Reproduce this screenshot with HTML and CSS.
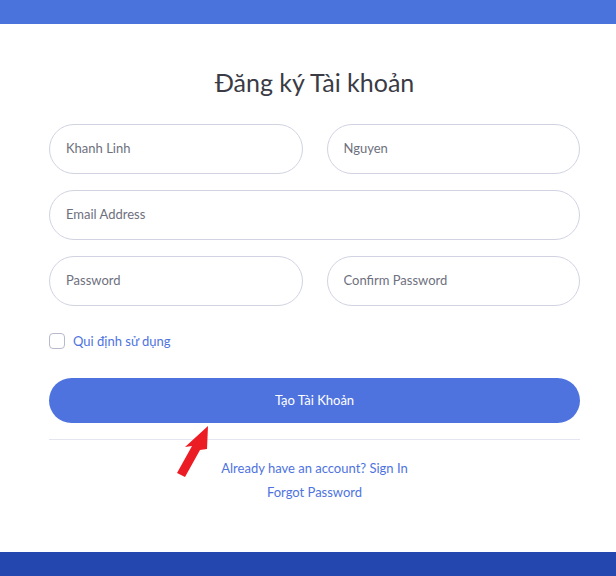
FILE: index.html
```html
<!DOCTYPE html>
<html lang="vi">

<head>
    <meta charset="UTF-8">
    <title>Đăng ký Tài khoản</title>
    <link rel="stylesheet" href="styles.css">
</head>

<body>
    <div class="topbar"></div>

    <!-- Register card -->
    <div class="card">
        <h1 class="title">Đăng ký Tài khoản</h1>
        <form class="user-form">
            <div class="row">
                <input type="text" class="form-input" placeholder="Khanh Linh">
                <input type="text" class="form-input" placeholder="Nguyen">
            </div>
            <div class="row">
                <input type="email" class="form-input" placeholder="Email Address">
            </div>
            <div class="row">
                <input type="password" class="form-input" placeholder="Password">
                <input type="password" class="form-input" placeholder="Confirm Password">
            </div>
            <label class="check-row">
                <span class="check-box"></span>
                <span class="check-label">Qui định sử dụng</span>
            </label>
            <button type="button" class="btn-primary">Tạo Tài Khoản</button>
        </form>
        <hr class="divider">
        <div class="links">
            <a href="#">Already have an account? Sign In</a>
            <a href="#">Forgot Password</a>
        </div>

        <!-- Red pointer arrow -->
        <svg class="pointer" width="45" height="62" viewBox="0 0 45 62">
            <polygon points="38,6 37,29 30,30 15,57 7,53 22,26 15,27" fill="#ec1c24"/>
        </svg>
    </div>

    <div class="bottombar"></div>
</body>

</html>
```

FILE: styles.css
```css
/* Basic reset */
body,
html {
    margin: 0;
    padding: 0;
    height: 100%;
    overflow: hidden;
    background: #fff;
    font-family: Lato, "Open Sans", sans-serif;
}

body {
    display: flex;
    flex-direction: column;
}

.topbar {
    height: 24px;
    background: #4a73dc;
}

.bottombar {
    height: 24px;
    background: #2347ae;
}

/* Card holding the form */
.card {
    flex: 1;
    position: relative;
    padding: 42px 36px 0 49px;
}

.title {
    margin: 0 0 26px;
    font-size: 25px;
    line-height: 32px;
    font-weight: 400;
    text-align: center;
    color: #3a3b45;
}

.user-form {
    display: flex;
    flex-direction: column;
}

.row {
    display: flex;
    gap: 24px;
    margin-bottom: 16px;
}

.form-input {
    flex: 1;
    min-width: 0;
    height: 50px;
    box-sizing: border-box;
    padding: 0 16px 2px;
    border: 1px solid #d1d3e2;
    border-radius: 10rem;
    font-family: inherit;
    font-size: 13px;
    color: #6e707e;
    outline: none;
}

.form-input::placeholder {
    color: #6e707e;
}

/* Terms checkbox */
.check-row {
    display: flex;
    align-items: center;
    gap: 8px;
    height: 20px;
    margin: 9px 0 27px;
    cursor: pointer;
}

.check-box {
    width: 14px;
    height: 14px;
    border: 1px solid #b7b9cc;
    border-radius: 4px;
}

.check-label {
    font-size: 13px;
    color: #4e73df;
}

.btn-primary {
    height: 45px;
    padding: 0 0 2px;
    border: none;
    border-radius: 10rem;
    background: #4e73df;
    color: #fff;
    font-family: inherit;
    font-size: 13px;
    cursor: pointer;
}

.divider {
    margin: 16px 0;
    border: 0;
    border-top: 1px solid #e3e6f0;
}

.links {
    display: flex;
    flex-direction: column;
    align-items: center;
}

.links a {
    font-size: 13px;
    line-height: 24px;
    color: #4e73df;
    text-decoration: none;
}

/* Arrow drawn over the card */
.pointer {
    position: absolute;
    left: 170px;
    top: 396px;
}
```
